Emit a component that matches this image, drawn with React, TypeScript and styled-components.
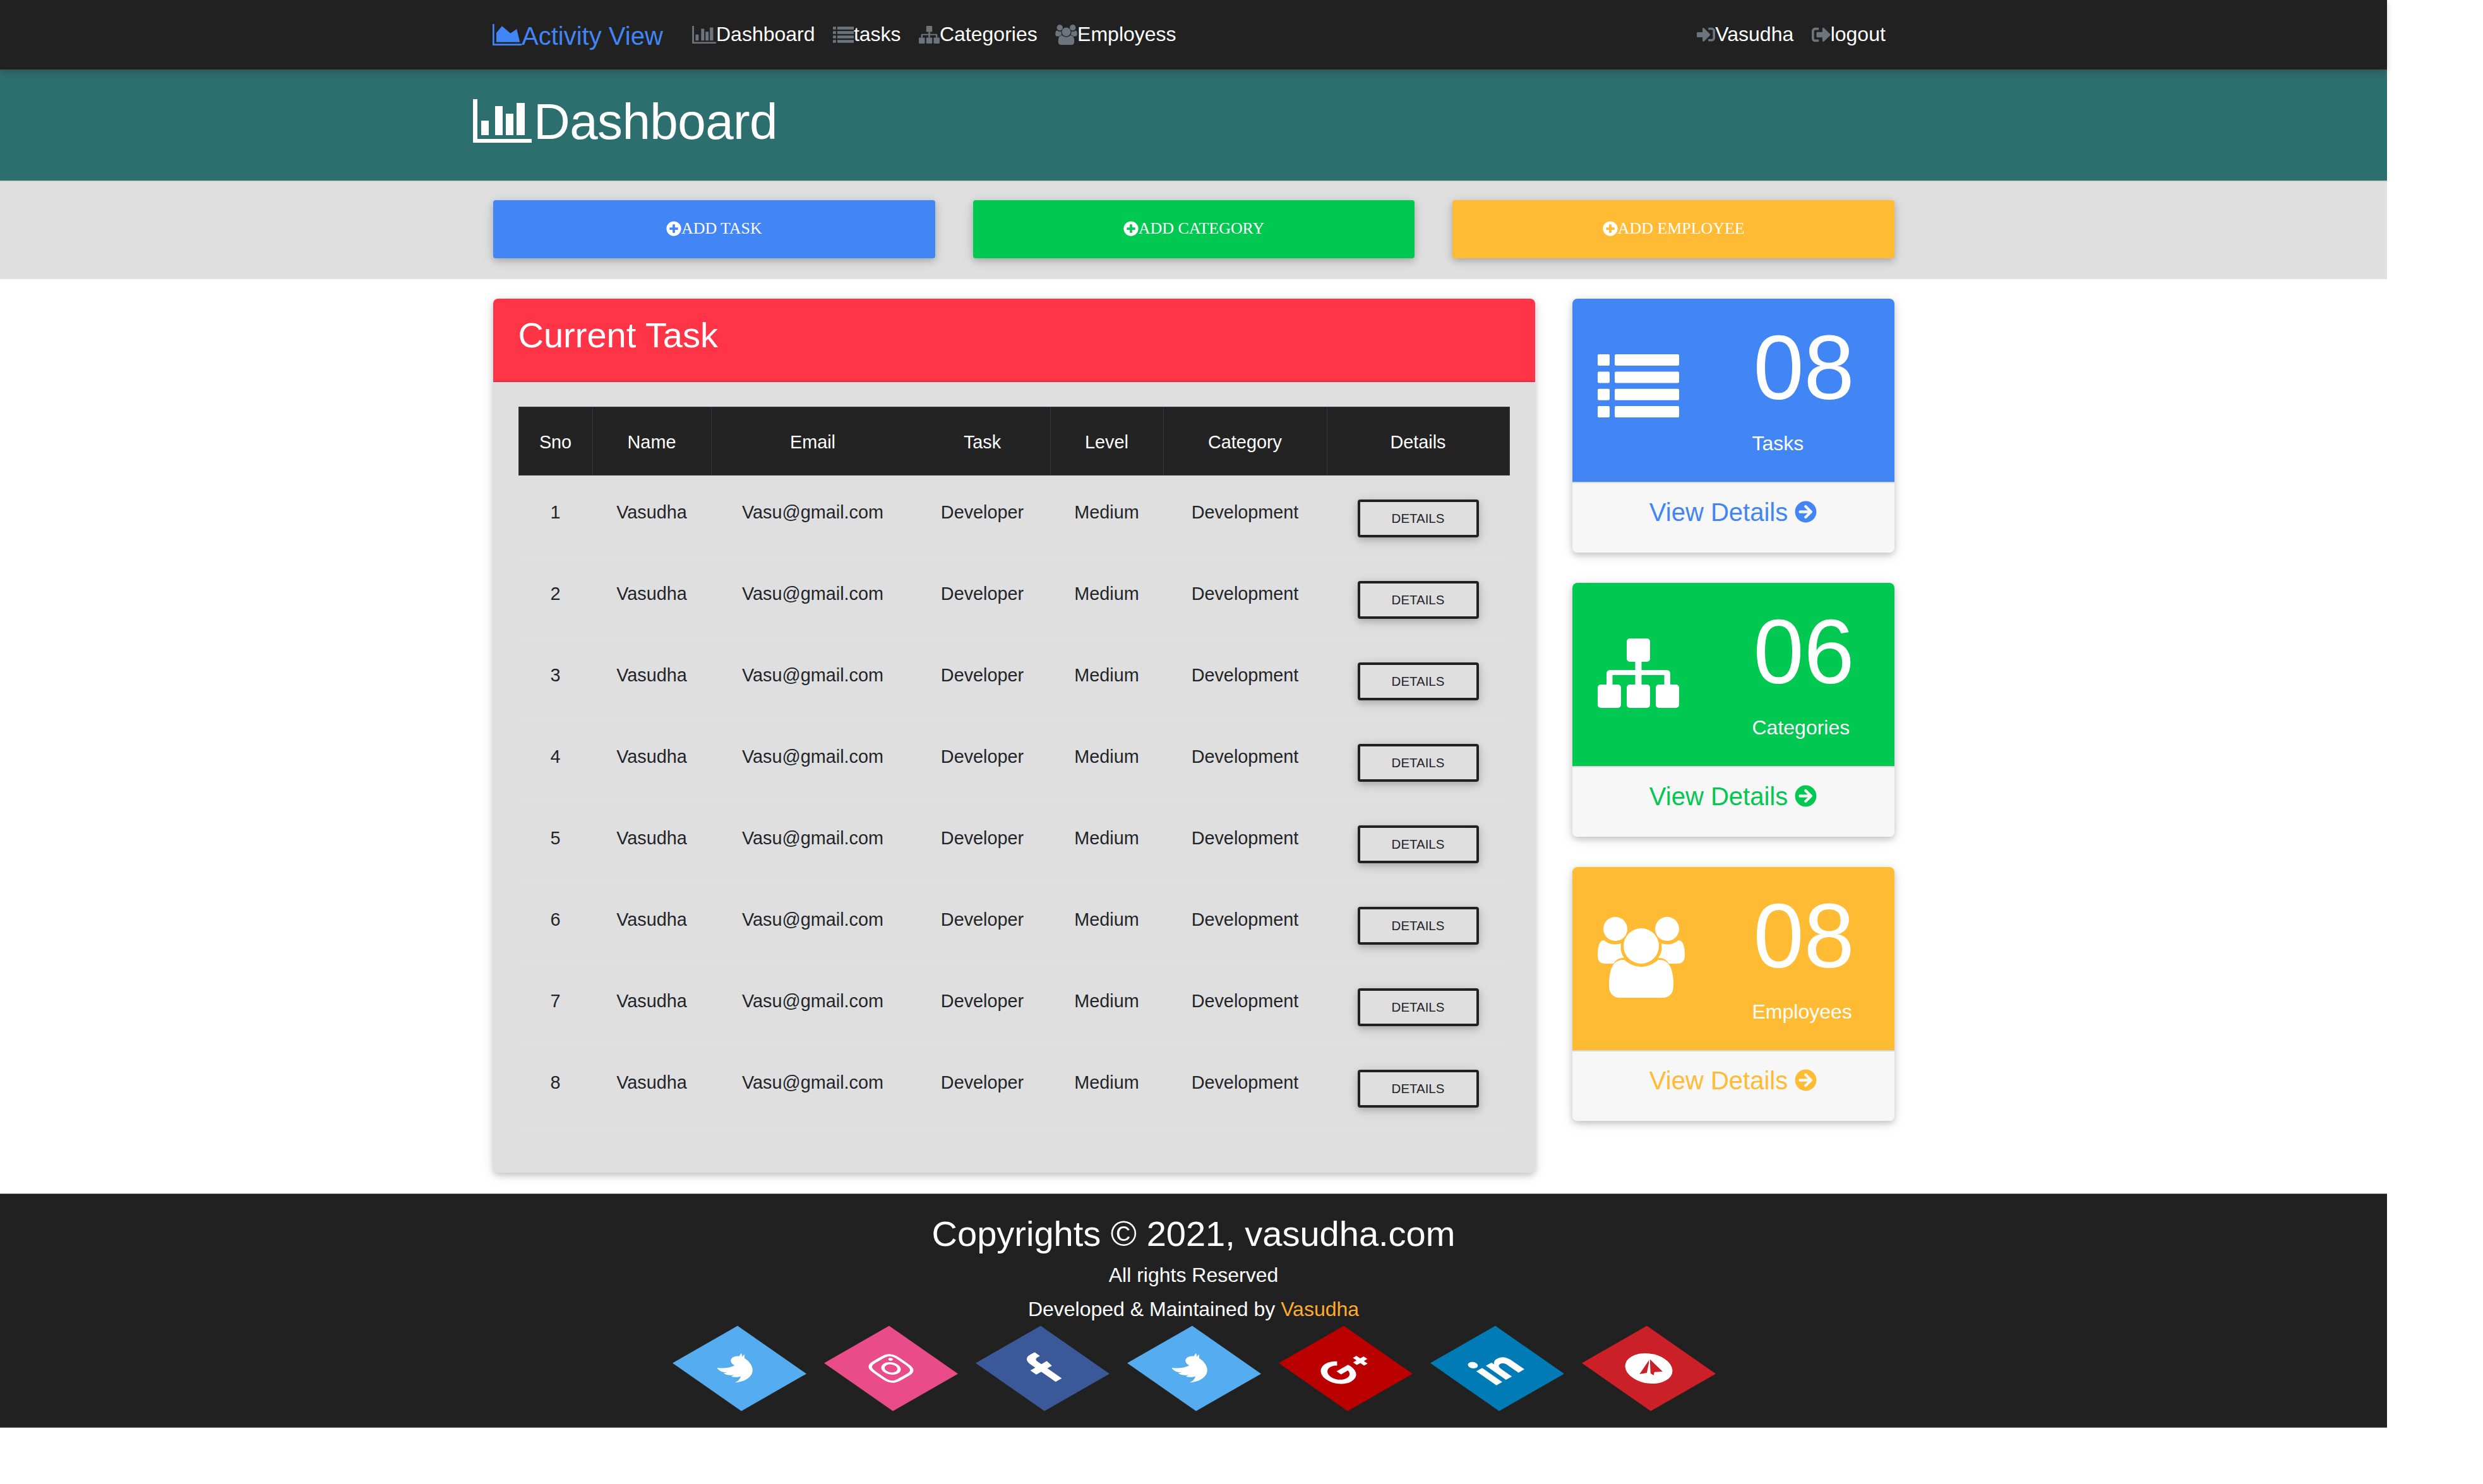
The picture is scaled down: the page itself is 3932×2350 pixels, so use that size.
import styled, { createGlobalStyle } from "styled-components";
import {
  FaArrowCircleRight,
  FaFacebookF,
  FaGooglePlusG,
  FaInstagram,
  FaLinkedinIn,
  FaPlusCircle,
  FaSignInAlt,
  FaSignOutAlt,
  FaTwitter,
} from "react-icons/fa";

const Colors = {
  dark: "#212121",
  teal: "#2d6f6e",
  grey: "#dfdfdf",
  blue: "#4285f4",
  green: "#00c851",
  yellow: "#ffbb33",
  red: "#ff3547",
  muted: "#6c757d",
  text: "#212529",
};

const cardShadow = "0 4px 10px rgba(0,0,0,.16), 0 4px 20px rgba(0,0,0,.12)";

const GlobalStyle = createGlobalStyle`
  html, body {
    margin: 0;
    padding: 0;
    background: #fff;
    font-family: "Liberation Sans", Arial, sans-serif;
  }
  * { box-sizing: border-box; }
`;

const Page = styled.div`
  width: 3780px;
`;

const Container = styled.div`
  width: 2220px;
  margin: 0 auto;
`;

const Navbar = styled.nav`
  position: relative;
  z-index: 1;
  height: 111px;
  background: ${Colors.dark};
  border-bottom: 1px solid #4a4a4a;
  box-shadow: 0 4px 10px rgba(0, 0, 0, .16);
`;

const NavInner = styled(Container)`
  height: 110px;
  display: flex;
  align-items: center;
`;

const Brand = styled.a`
  display: flex;
  align-items: center;
  color: ${Colors.blue};
  font-size: 40px;
  margin-right: 32px;
  padding-top: 4px;

  svg {
    margin-top: -4px;
  }
`;

const NavLinks = styled.div<{ $right?: boolean }>`
  display: flex;
  align-items: center;
  margin-left: ${(p) => (p.$right ? "auto" : "0")};
  padding-bottom: 1px;
`;

const NavLink = styled.a`
  display: flex;
  align-items: center;
  padding: 0 14.2px;
  color: #fff;
  font-size: 32px;
  white-space: nowrap;

  svg {
    color: ${Colors.muted};
    fill: currentColor;
    flex: none;
  }
`;

const PageHeader = styled.header`
  height: 175px;
  background: ${Colors.teal};
  padding-top: 31px;
`;

const PageTitle = styled.h1`
  display: flex;
  align-items: center;
  margin: 0 0 0 -31px;
  color: #fff;
  font-size: 80px;
  font-weight: 400;
  line-height: 96px;
  letter-spacing: -.6px;
  gap: 3px;

  svg {
    fill: #fff;
  }
`;

const PageTitleText = styled.span`
  margin-top: 3px;
`;

const ActionBar = styled.section`
  height: 156px;
  background: ${Colors.grey};
  border-top: 2px solid #d0d6d5;
  padding-top: 29px;
`;

const ActionRow = styled(Container)`
  display: grid;
  grid-template-columns: repeat(3, 1fr);
  gap: 60px;
  padding-left: 1px;
`;

const ActionButton = styled.button<{ $bg: string }>`
  height: 92px;
  border: 0;
  border-radius: 4px;
  background: ${(p) => p.$bg};
  color: #fff;
  box-shadow: ${cardShadow};
  font-family: "Liberation Serif", "Times New Roman", serif;
  font-size: 25.92px;
  display: flex;
  align-items: center;
  justify-content: center;
  padding: 0 0 2px;

  svg {
    width: 24px;
    height: 24px;
  }
`;

const Main = styled.main`
  width: 2219px;
  margin: 0 auto;
  padding: 31px 0 33px;
  display: grid;
  grid-template-columns: 1650px 510px;
  justify-content: space-between;
  align-items: start;
`;

const TaskPanel = styled.section`
  background: ${Colors.grey};
  border-radius: 8px;
  box-shadow: ${cardShadow};
`;

const PanelHead = styled.div`
  background: ${Colors.red};
  border-bottom: 2px solid rgba(0, 0, 0, .125);
  border-radius: 8px 8px 0 0;
  padding: 24px 40px;
  height: 132px;
`;

const PanelTitle = styled.h3`
  margin: 0;
  color: #fff;
  font-size: 56px;
  font-weight: 400;
  line-height: 67px;
`;

const PanelBody = styled.div`
  padding: 39px 40px 72px;
`;

const Table = styled.table`
  width: 1569px;
  table-layout: fixed;
  border-collapse: collapse;
  font-size: 28.8px;
  color: ${Colors.text};
  text-align: center;
`;

const Th = styled.th<{ $noBorder?: boolean }>`
  height: 108px;
  padding: 3px 0 0;
  background: #232323;
  color: #fff;
  font-weight: 400;
  line-height: 43px;
  border: 1px solid #32383e;
  border-right-color: ${(p) => (p.$noBorder ? "#232323" : "#32383e")};
`;

const Td = styled.td`
  height: 129px;
  padding: 37px 0 0;
  vertical-align: top;
  line-height: 43px;
  border-bottom: 1px solid #e1e2e3;
`;

const ActionCell = styled(Td)`
  padding-top: 38px;
`;

const DetailsButton = styled.button`
  display: block;
  width: 192px;
  height: 60px;
  margin: 0 auto;
  padding: 0;
  border: 4px solid ${Colors.dark};
  border-radius: 4px;
  background: transparent;
  color: ${Colors.text};
  font-family: inherit;
  font-size: 20.48px;
  box-shadow: ${cardShadow};
`;

const StatColumn = styled.aside`
  display: grid;
  gap: 48px;
`;

const StatCard = styled.article`
  border-radius: 8px;
  overflow: hidden;
  box-shadow: ${cardShadow};
`;

const StatHead = styled.div<{ $bg: string }>`
  height: 290px;
  background: ${(p) => p.$bg};
  color: #fff;
  display: grid;
  grid-template-columns: 245px 1fr;
  padding-left: 40px;
`;

const StatIcon = styled.div<{ $top: number }>`
  padding-top: ${(p) => p.$top}px;

  svg {
    display: block;
    fill: #fff;
  }
`;

const StatNumbers = styled.div`
  padding-top: 27px;
`;

const StatValue = styled.div`
  padding-left: 2px;
  font-size: 144px;
  line-height: 166px;
`;

const StatLabel = styled.div`
  margin-top: 12px;
  font-size: 32px;
  line-height: 48px;
`;

const StatFoot = styled.a<{ $color: string }>`
  height: 112px;
  background: #f7f7f7;
  border-top: 2px solid rgba(0, 0, 0, .125);
  color: ${(p) => p.$color};
  font-size: 40px;
  line-height: 48px;
  display: flex;
  justify-content: center;
  align-items: flex-start;
  gap: 11px;
  padding-top: 22px;

  svg {
    width: 35px;
    height: 35px;
    margin-top: 6px;
  }
`;

const Footer = styled.footer`
  height: 371px;
  background: ${Colors.dark};
  border-top: 1px solid #666;
  border-bottom: 1px solid #666;
  color: #fff;
  text-align: center;
  padding-top: 29px;
`;

const FooterTitle = styled.h3`
  margin: 0 0 8px;
  font-size: 56px;
  font-weight: 400;
  line-height: 67px;
`;

const FooterLine = styled.p`
  margin: 0 0 6px;
  font-size: 32px;
  line-height: 48px;
`;

const Highlight = styled.span`
  color: #ffab2e;
`;

const SocialRow = styled.div`
  display: flex;
  justify-content: center;
  margin-top: 20px;
  padding-left: 1px;
`;

const SocialCell = styled.div`
  width: 240px;
  display: flex;
  justify-content: center;
`;

const Diamond = styled.a<{ $bg: string; $size: number }>`
  width: 100px;
  height: 100px;
  background: ${(p) => p.$bg};
  color: #fff;
  transform: matrix(1.03, -0.59, 1.09, 0.76, 0, 0);
  display: flex;
  align-items: center;
  justify-content: center;

  svg {
    width: ${(p) => p.$size}px;
    height: ${(p) => p.$size}px;
  }
`;

function AreaIcon() {
  return (
    <svg width="46" height="34" viewBox="0 0 46 34" fill="currentColor">
      <path d="M0 0h2.700v31.300H46V34H0z" />
      <path d="M6 28.700V14L15 3.300 28.300 14.700 38.300 8 43.300 28.700z" />
    </svg>
  );
}

function BarIcon({ width, height }: { width: number; height: number }) {
  return (
    <svg width={width} height={height} viewBox="0 0 93 69" fill="currentColor">
      <path d="M0 0h7v63h86v6H0z" />
      <path d="M13 34h12v23H13zM35 11h12v46H35zM52 23h12v34H52zM69 6h13v51H69z" />
    </svg>
  );
}

function ListIcon({ width, height }: { width: number; height: number }) {
  const bars = [0, 27.4, 54.8, 82];
  return (
    <svg width={width} height={height} viewBox="0 0 129 100">
      {bars.map((y) => (
        <g key={y}>
          <rect x="0" y={y} width="19" height="18" rx="2" />
          <rect x="27" y={y} width="102" height="18" rx="2" />
        </g>
      ))}
    </svg>
  );
}

function SitemapIcon({ width, height }: { width: number; height: number }) {
  return (
    <svg width={width} height={height} viewBox="0 0 129 110">
      <rect x="46" y="0" width="37" height="37" rx="5" />
      <rect x="0" y="73" width="37" height="37" rx="5" />
      <rect x="46" y="73" width="37" height="37" rx="5" />
      <rect x="92" y="73" width="37" height="37" rx="5" />
      <path d="M59.500 37h10v13H109q6 0 6 6v17h-9.500V58H69.500v15h-10V58H23.500v15H14V56q0-6 6-6h39.500z" />
    </svg>
  );
}

function UsersIcon({ width, height }: { width: number; height: number }) {
  return (
    <svg width={width} height={height} viewBox="0 0 138 128">
      <ellipse cx="28" cy="19" rx="19" ry="19" />
      <ellipse cx="110" cy="19" rx="19" ry="19" />
      <ellipse cx="69" cy="46" rx="28" ry="28" />
      <path d="M10 37Q19 44 27 43.500 33 43 37 42 35 56 42 65 31 64 25 74H12Q0 74 0 61 0 37 10 37Z" />
      <path d="M128 37Q119 44 111 43.500 105 43 101 42 103 56 96 65 107 64 113 74H126Q138 74 138 61 138 37 128 37Z" />
      <path d="M42 68Q55 79 69 79 83 79 96 68 120 66 120 108 120 128 102 128H36Q18 128 18 108 18 66 42 68Z" />
    </svg>
  );
}

// white disc with the red paper plane, coordinates are in the diamond's own plane
function PlaneIcon() {
  return (
    <svg viewBox="-25 -25 50 50">
      <circle cx="0" cy="0" r="25" fill="#fff" />
      <path
        fill="#cb2027"
        d="M10.400-9.500-14.700 .4-7 3.800 6.400-6zM12-9.500 7.900 12.700 .3 7.700-4.300 11.100-4.400 6.700 6.900-4.700z"
      />
    </svg>
  );
}

const columns = [
  { title: "Sno", width: 117 },
  { title: "Name", width: 188 },
  { title: "Email", width: 322, noBorder: true },
  { title: "Task", width: 215 },
  { title: "Level", width: 179 },
  { title: "Category", width: 259 },
  { title: "Details", width: 289 },
];

const rows = [1, 2, 3, 4, 5, 6, 7, 8];

const stats = [
  {
    value: "08",
    label: "Tasks",
    color: Colors.blue,
    top: 88,
    icon: <ListIcon width={129} height={100} />,
  },
  {
    value: "06",
    label: "Categories",
    color: Colors.green,
    top: 88,
    icon: <SitemapIcon width={129} height={110} />,
  },
  {
    value: "08",
    label: "Employees",
    color: Colors.yellow,
    top: 79,
    icon: <UsersIcon width={138} height={128} />,
  },
];

const socials = [
  { bg: "#55acee", size: 42, icon: <FaTwitter /> },
  { bg: "#ea4c89", size: 46, icon: <FaInstagram /> },
  { bg: "#3b5998", size: 48, icon: <FaFacebookF /> },
  { bg: "#55acee", size: 42, icon: <FaTwitter /> },
  { bg: "#bb0000", size: 62, icon: <FaGooglePlusG /> },
  { bg: "#007bb5", size: 50, icon: <FaLinkedinIn /> },
  { bg: "#cb2027", size: 50, icon: <PlaneIcon /> },
];

export default function App() {
  return (
    <Page>
      <GlobalStyle />

      <Navbar>
        <NavInner>
          <Brand>
            <AreaIcon />
            Activity View
          </Brand>
          <NavLinks>
            <NavLink>
              <BarIcon width={38} height={28} />
              Dashboard
            </NavLink>
            <NavLink>
              <ListIcon width={33} height={26} />
              tasks
            </NavLink>
            <NavLink>
              <SitemapIcon width={33} height={28} />
              Categories
            </NavLink>
            <NavLink>
              <UsersIcon width={35} height={32} />
              Employess
            </NavLink>
          </NavLinks>
          <NavLinks $right>
            <NavLink>
              <FaSignInAlt size={29} />
              Vasudha
            </NavLink>
            <NavLink>
              <FaSignOutAlt size={30} />
              logout
            </NavLink>
          </NavLinks>
        </NavInner>
      </Navbar>

      <PageHeader>
        <Container>
          <PageTitle>
            <BarIcon width={93} height={69} />
            <PageTitleText>Dashboard</PageTitleText>
          </PageTitle>
        </Container>
      </PageHeader>

      <ActionBar>
        <ActionRow>
          <ActionButton $bg={Colors.blue}>
            <FaPlusCircle />
            ADD TASK
          </ActionButton>
          <ActionButton $bg={Colors.green}>
            <FaPlusCircle />
            ADD CATEGORY
          </ActionButton>
          <ActionButton $bg={Colors.yellow}>
            <FaPlusCircle />
            ADD EMPLOYEE
          </ActionButton>
        </ActionRow>
      </ActionBar>

      <Main>
        <TaskPanel>
          <PanelHead>
            <PanelTitle>Current Task</PanelTitle>
          </PanelHead>
          <PanelBody>
            <Table>
              <colgroup>
                {columns.map((col) => (
                  <col key={col.title} width={col.width} />
                ))}
              </colgroup>
              <thead>
                <tr>
                  {columns.map((col) => (
                    <Th key={col.title} $noBorder={col.noBorder}>
                      {col.title}
                    </Th>
                  ))}
                </tr>
              </thead>
              <tbody>
                {rows.map((sno) => (
                  <tr key={sno}>
                    <Td>{sno}</Td>
                    <Td>Vasudha</Td>
                    <Td>Vasu@gmail.com</Td>
                    <Td>Developer</Td>
                    <Td>Medium</Td>
                    <Td>Development</Td>
                    <ActionCell>
                      <DetailsButton>DETAILS</DetailsButton>
                    </ActionCell>
                  </tr>
                ))}
              </tbody>
            </Table>
          </PanelBody>
        </TaskPanel>

        <StatColumn>
          {stats.map((stat) => (
            <StatCard key={stat.label}>
              <StatHead $bg={stat.color}>
                <StatIcon $top={stat.top}>{stat.icon}</StatIcon>
                <StatNumbers>
                  <StatValue>{stat.value}</StatValue>
                  <StatLabel>{stat.label}</StatLabel>
                </StatNumbers>
              </StatHead>
              <StatFoot $color={stat.color}>
                View Details
                <FaArrowCircleRight />
              </StatFoot>
            </StatCard>
          ))}
        </StatColumn>
      </Main>

      <Footer>
        <FooterTitle>Copyrights © 2021, vasudha.com</FooterTitle>
        <FooterLine>All rights Reserved</FooterLine>
        <FooterLine>
          Developed &amp; Maintained by <Highlight>Vasudha</Highlight>
        </FooterLine>
        <SocialRow>
          {socials.map((social, index) => (
            <SocialCell key={index}>
              <Diamond $bg={social.bg} $size={social.size}>
                {social.icon}
              </Diamond>
            </SocialCell>
          ))}
        </SocialRow>
      </Footer>
    </Page>
  );
}
